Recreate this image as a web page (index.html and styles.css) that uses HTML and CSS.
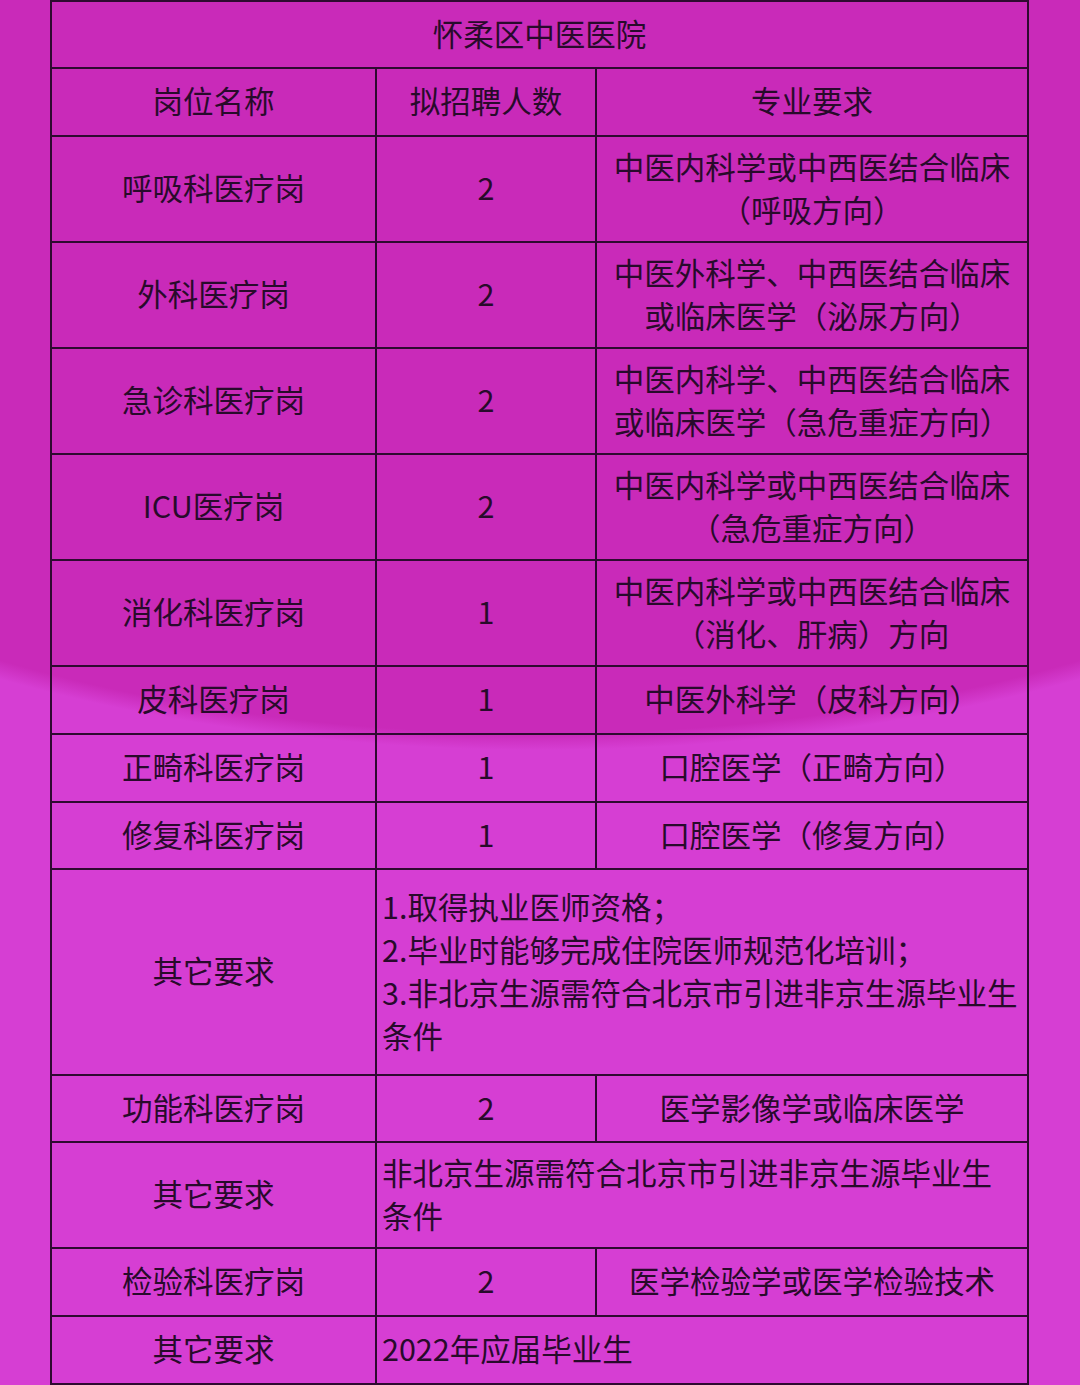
FILE: index.html
```html
<!DOCTYPE html>
<html lang="zh-CN">
<head>
<meta charset="utf-8">
<title>怀柔区中医医院</title>
<link rel="stylesheet" href="styles.css">
</head>
<body>
<main class="page">
  <table class="jobs">
    <colgroup>
      <col class="c1"><col class="c2"><col class="c3">
    </colgroup>
    <tr class="h0"><td colspan="3">怀柔区中医医院</td></tr>
    <tr class="h1"><td>岗位名称</td><td>拟招聘人数</td><td>专业要求</td></tr>
    <tr class="h2"><td>呼吸科医疗岗</td><td>2</td><td>中医内科学或中西医结合临床<br>（呼吸方向）</td></tr>
    <tr class="h2"><td>外科医疗岗</td><td>2</td><td>中医外科学、中西医结合临床<br>或临床医学（泌尿方向）</td></tr>
    <tr class="h2"><td>急诊科医疗岗</td><td>2</td><td>中医内科学、中西医结合临床<br>或临床医学（急危重症方向）</td></tr>
    <tr class="h2"><td>ICU医疗岗</td><td>2</td><td>中医内科学或中西医结合临床<br>（急危重症方向）</td></tr>
    <tr class="h2"><td>消化科医疗岗</td><td>1</td><td>中医内科学或中西医结合临床<br>（消化、肝病）方向</td></tr>
    <tr class="h1"><td>皮科医疗岗</td><td>1</td><td>中医外科学（皮科方向）</td></tr>
    <tr class="h1"><td>正畸科医疗岗</td><td>1</td><td>口腔医学（正畸方向）</td></tr>
    <tr class="h0"><td>修复科医疗岗</td><td>1</td><td>口腔医学（修复方向）</td></tr>
    <tr class="h4"><td>其它要求</td><td colspan="2" class="left">1.取得执业医师资格；<br>2.毕业时能够完成住院医师规范化培训；<br><span class="nowrap">3.非北京生源需符合北京市引进非京生源毕业生</span><br>条件</td></tr>
    <tr class="h0"><td>功能科医疗岗</td><td>2</td><td>医学影像学或临床医学</td></tr>
    <tr class="h2"><td>其它要求</td><td colspan="2" class="left">非北京生源需符合北京市引进非京生源毕业生<br>条件</td></tr>
    <tr class="h1"><td>检验科医疗岗</td><td>2</td><td>医学检验学或医学检验技术</td></tr>
    <tr class="h1"><td>其它要求</td><td colspan="2" class="left">2022年应届毕业生</td></tr>
  </table>
</main>
</body>
</html>
```

FILE: styles.css
```css
html, body {
  margin: 0;
  padding: 0;
}
body {
  width: 1080px;
  height: 1385px;
  overflow: hidden;
  background-color: #d63ed3;
  background-image: radial-gradient(ellipse 1100px 550px at 540px 200px, #c92ab9 0%, #c92ab9 97%, #d63ed3 100%);
  font-family: "Noto Sans CJK SC", "Noto Sans", sans-serif;
  color: #280a2b;
}
.page {
  padding-left: 50px;
}
.jobs {
  border-collapse: collapse;
  table-layout: fixed;
  width: 979px;
  font-size: 30.5px;
  line-height: 43px;
}
.c1 { width: 325px; }
.c2 { width: 220px; }
.c3 { width: 432px; }
.jobs td {
  border: 2px solid #2e0a30;
  text-align: center;
  vertical-align: middle;
  padding: 0 2px 3px;
}
.jobs td.left {
  text-align: left;
  padding-left: 5px;
  padding-right: 2px;
}
.nowrap {
  white-space: nowrap;
}
.h0 { height: 67px; }
.h1 { height: 68px; }
.h2 { height: 106px; }
.h4 { height: 206px; }
```
